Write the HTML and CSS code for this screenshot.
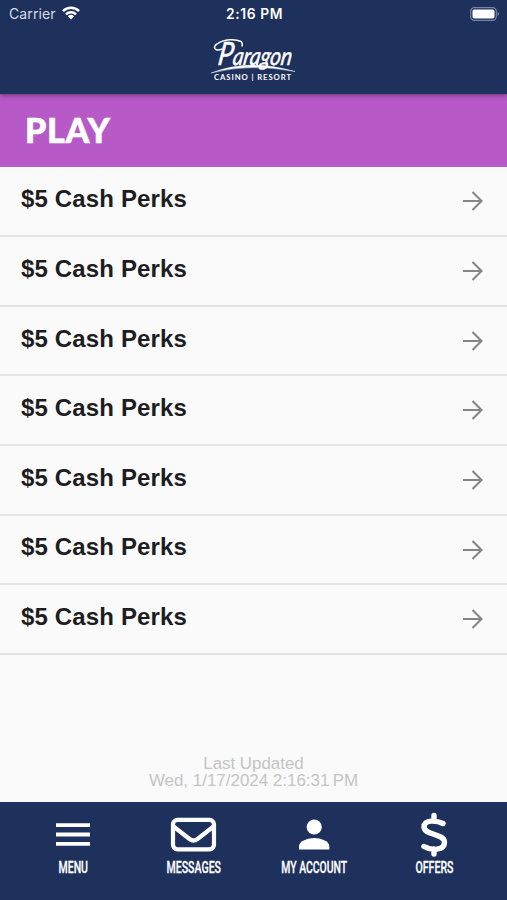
FILE: index.html
```html
<!DOCTYPE html>
<html lang="en">
<head>
<meta charset="utf-8">
<title>Play</title>
<link rel="stylesheet" href="styles.css">
</head>
<body>
<div class="app">
  <header class="header">
    <div class="status">
      <div class="carrier"><span>Carrier</span>
        <svg class="wifi" width="18" height="14" viewBox="0 0 18 14" fill="none" stroke="#fff" stroke-width="2.5"><path d="M1 5.1a11.5 11.5 0 0 1 16 0M4 8.3a7.2 7.2 0 0 1 10 0"/><path d="M9 13.5 5.9 10.3a4.5 4.5 0 0 1 6.2 0z" fill="#fff" stroke="none"/></svg>
      </div>
      <time class="clock">2:16 PM</time>
      <svg class="battery" width="30" height="14" viewBox="0 0 30 14"><rect x=".7" y=".7" width="25.6" height="12.6" rx="3.6" fill="none" stroke="#7984a5" stroke-width="1.2"/><rect x="2.5" y="2.5" width="22" height="9" rx="1.8" fill="#fff"/><path d="M27.7 4.8q3 2.2 0 4.4z" fill="#7984a5"/></svg>
    </div>
    <svg class="logo" width="86" height="48" viewBox="0 0 86 48">
      <text class="logo-name" transform="translate(6 27) skewX(-9)" textLength="74" lengthAdjust="spacingAndGlyphs"><tspan class="logo-initial">P</tspan>aragon</text>
      <path d="M11 11C4 14 1 9 6 6C13 1 24 .5 30 3.500q2 1.500 1 5" fill="none" stroke="#fff" stroke-width="1.5"/>
      <path d="M0 35Q38 20 84 33.500Q40 25 0 35z" fill="#fff" stroke="#fff" stroke-width=".4"/>
      <text class="logo-sub" x="3" y="42" textLength="78" lengthAdjust="spacingAndGlyphs">CASINO | RESORT</text>
    </svg>
  </header>
  <h1 class="title">PLAY</h1>
  <main class="main">
    <ul class="list">
      <li class="row"><span>$5 Cash Perks</span><svg class="arrow" viewBox="0 0 20 20"><path d="M0 10h18.5M9.5 1l9 9-9 9"/></svg></li>
      <li class="row"><span>$5 Cash Perks</span><svg class="arrow" viewBox="0 0 20 20"><path d="M0 10h18.5M9.5 1l9 9-9 9"/></svg></li>
      <li class="row"><span>$5 Cash Perks</span><svg class="arrow" viewBox="0 0 20 20"><path d="M0 10h18.5M9.5 1l9 9-9 9"/></svg></li>
      <li class="row"><span>$5 Cash Perks</span><svg class="arrow" viewBox="0 0 20 20"><path d="M0 10h18.5M9.5 1l9 9-9 9"/></svg></li>
      <li class="row"><span>$5 Cash Perks</span><svg class="arrow" viewBox="0 0 20 20"><path d="M0 10h18.5M9.5 1l9 9-9 9"/></svg></li>
      <li class="row"><span>$5 Cash Perks</span><svg class="arrow" viewBox="0 0 20 20"><path d="M0 10h18.5M9.5 1l9 9-9 9"/></svg></li>
      <li class="row"><span>$5 Cash Perks</span><svg class="arrow" viewBox="0 0 20 20"><path d="M0 10h18.5M9.5 1l9 9-9 9"/></svg></li>
    </ul>
    <p class="updated">Last Updated<br><span class="stamp">Wed, 1/17/2024 2:16:31&#8201;PM</span></p>
  </main>
  <nav class="nav">
    <a class="tab">
      <svg width="48" height="48" viewBox="0 0 48 48" stroke="#fff" stroke-width="3.8"><path d="M7 13.2h34M7 22.5h34M7 31.8h34"/></svg>
      <svg class="label" width="120" height="22"><text x="45.5" y="15.3" textLength="29.5" lengthAdjust="spacingAndGlyphs">MENU</text></svg>
    </a>
    <a class="tab">
      <svg width="48" height="48" viewBox="0 0 48 48" fill="none" stroke="#fff" stroke-width="4.2" stroke-linejoin="round"><rect x="4" y="7.8" width="41" height="29.5" rx="4.5"/><path d="M4.5 14.5 20.5 27q4 3 8 0L44.500 14.5"/></svg>
      <svg class="label" width="120" height="22"><text x="33.5" y="15.3" textLength="54.500" lengthAdjust="spacingAndGlyphs">MESSAGES</text></svg>
    </a>
    <a class="tab">
      <svg width="48" height="48" viewBox="0 0 48 48" fill="#fff"><circle cx="24.2" cy="15" r="7.6"/><path d="M9 37.500v-3.500C9 29 18 26 24.200 26S39.300 29 39.300 34v3.500z"/></svg>
      <svg class="label" width="120" height="22"><text x="27.200" y="15.3" textLength="66" lengthAdjust="spacingAndGlyphs">MY ACCOUNT</text></svg>
    </a>
    <a class="tab">
      <svg width="48" height="48" viewBox="0 0 48 48" fill="none" stroke="#fff" stroke-width="5.4" stroke-linecap="round"><path d="M24 3.500v5M24 37v5M33 11.500C27 8.500 14 7 14 15c0 8.500 20.500 6 20.500 15.500 0 8-13 8.500-20.500 4"/></svg>
      <svg class="label" width="120" height="22"><text x="41.500" y="15.3" textLength="38" lengthAdjust="spacingAndGlyphs">OFFERS</text></svg>
    </a>
  </nav>
</div>
</body>
</html>
```
FILE: styles.css
```css
* { box-sizing: border-box; }
body { margin: 0; font-family: "Liberation Sans", Arial, sans-serif; background: #fafafa; }
.app { width: 507px; height: 900px; display: flex; flex-direction: column; overflow: hidden; }
.header { height: 94px; flex: none; background: #1e305c; position: relative; box-shadow: 0 1px 5px rgba(0, 0, 0, .45); display: flex; flex-direction: column; align-items: center; }
.status { width: 100%; height: 28px; display: grid; grid-template-columns: 1fr auto 1fr; align-items: center; padding: 0 7px 0 9px; color: #fff; font-family: Inter, sans-serif; font-size: 14px; flex: none; }
.carrier { display: flex; align-items: center; gap: 6px; color: #d7dce8; letter-spacing: .1px; margin-top: -1px; }
.wifi { margin-top: -1px; }
.clock { font-weight: 600; font-size: 13.8px; letter-spacing: .6px; }
.battery { justify-self: end; margin-top: -1px; }
.logo { margin-top: 10px; overflow: visible; }
.logo text { fill: #fff; }
.logo-name { font: italic 400 25px Lato, sans-serif; stroke: #fff; stroke-width: .5px; }
.logo-initial { font-size: 32px; }
.logo-sub { font: 700 6.8px Lato, sans-serif; letter-spacing: .8px; }
.title { margin: 0; height: 73px; flex: none; padding: 0 26px 0 25px; background: #b75ac8; color: #fff; font: 900 34px/72px Lato, sans-serif; letter-spacing: .7px; -webkit-text-stroke: .6px #fff; }
.main { flex: 1; min-height: 0; display: flex; flex-direction: column; justify-content: space-between; }
.list { list-style: none; margin: 0; padding: .5px 0 0; }
.row { height: 69.65px; border-bottom: 2px solid #e4e4e4; padding: 0 24px 2px 21px; display: flex; align-items: center; justify-content: space-between; font-size: 24px; font-weight: 700; letter-spacing: .15px; color: #1d1d1f; }
.row span { margin-top: -2.2px; }
.arrow { width: 20px; height: 20px; margin-top: 2px; fill: none; stroke: #858585; stroke-width: 2.1; }
.updated { margin: 0 0 12.5px; text-align: center; font-size: 16.9px; line-height: 17.3px; color: #c4c4c4; }
.stamp { letter-spacing: .02px; }
.nav { height: 98px; flex: none; background: #1e305c; display: grid; grid-template-columns: repeat(4, 120.5px); justify-content: center; padding-top: 10px; }
.tab { display: flex; flex-direction: column; align-items: center; }
.label { font: 500 17px Roboto, sans-serif; fill: #fff; margin-top: -2px; overflow: visible; }
.label text { stroke: #fff; stroke-width: .3px; }
```
